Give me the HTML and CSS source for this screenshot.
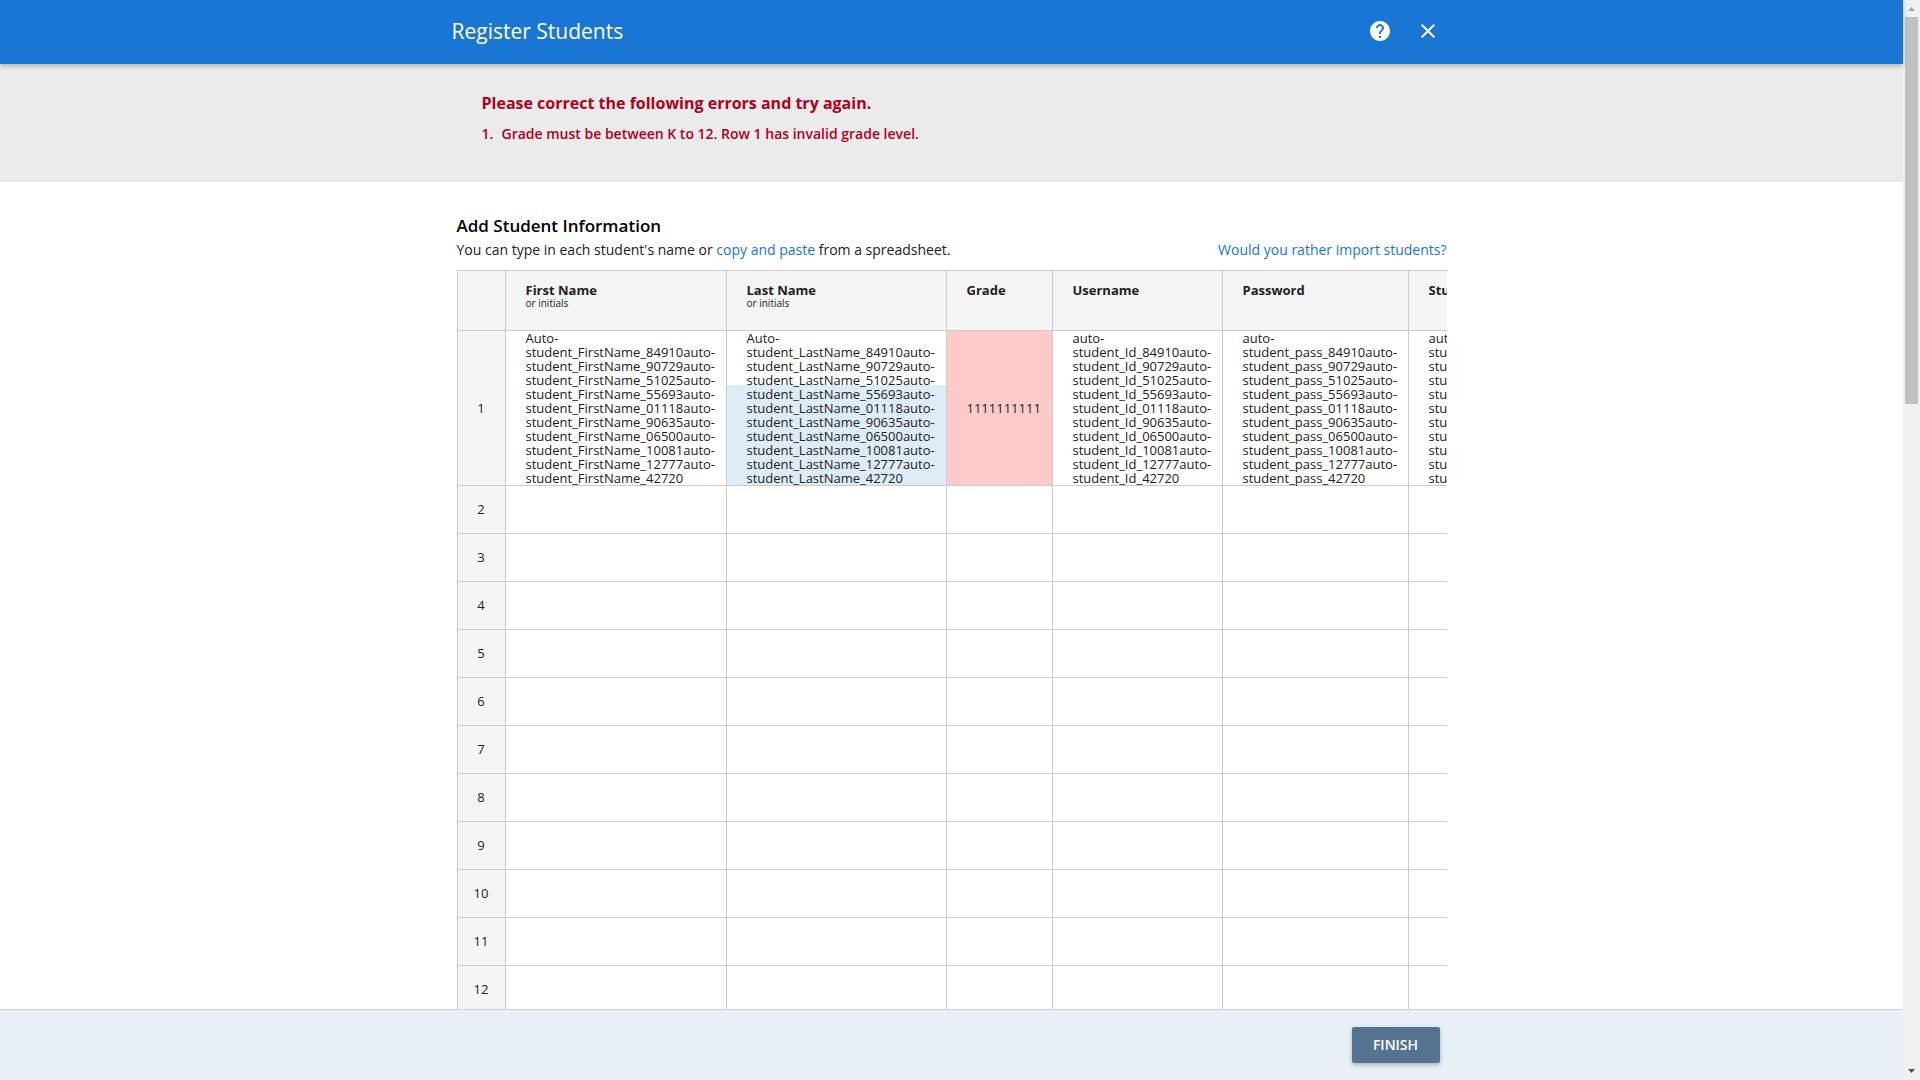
FILE: index.html
```html
<!DOCTYPE html>
<html lang="en">
<head>
<meta charset="utf-8">
<meta name="viewport" content="width=device-width, initial-scale=1">
<title>Register Students</title>
<link rel="stylesheet" href="styles.css">
</head>
<body>
<div class="page">
  <header class="topbar">
    <div class="topbar-inner">
      <h1 class="topbar-title">Register Students</h1>
      <div class="topbar-actions">
        <button class="icon-button" type="button" aria-label="Help">
          <svg class="icon" viewBox="0 0 24 24" aria-hidden="true"><path d="M12 2C6.48 2 2 6.48 2 12s4.48 10 10 10 10-4.48 10-10S17.52 2 12 2zm1 17h-2v-2h2v2zm2.07-7.75l-.9.92C13.45 12.9 13 13.5 13 15h-2v-.5c0-1.1.45-2.1 1.17-2.83l1.24-1.26c.37-.36.59-.86.59-1.41 0-1.1-.9-2-2-2s-2 .9-2 2H8c0-2.210 1.790-4 4-4s4 1.790 4 4c0 .88-.36 1.680-.93 2.250z"/></svg>
        </button>
        <button class="icon-button" type="button" aria-label="Close">
          <svg class="icon" viewBox="0 0 24 24" aria-hidden="true"><path d="M19 6.410L17.590 5 12 10.590 6.410 5 5 6.410 10.590 12 5 17.590 6.410 19 12 13.410 17.590 19 19 17.590 13.410 12z"/></svg>
        </button>
      </div>
    </div>
  </header>

  <main class="content">
    <section class="alert" role="alert">
      <div class="alert-inner">
        <h2 class="alert-title">Please correct the following errors and try again.</h2>
        <ol class="alert-list">
          <li>Grade must be between K to 12. Row 1 has invalid grade level.</li>
        </ol>
      </div>
    </section>

    <section class="students">
      <h2 class="students-title">Add Student Information</h2>
      <div class="students-intro">
        <p class="students-text">You can type in each student's name or <a class="link" href="#paste">copy and paste</a> from a spreadsheet.</p>
        <a class="link" href="#import">Would you rather import students?</a>
      </div>
      <div class="sheet-viewport">
        <table class="sheet">
          <colgroup>
            <col class="col-index"><col class="col-first"><col class="col-last"><col class="col-grade"><col class="col-user"><col class="col-pass"><col class="col-id">
          </colgroup>
          <thead>
            <tr>
              <td></td>
              <th scope="col">First Name<small class="hint">or initials</small></th>
              <th scope="col">Last Name<small class="hint">or initials</small></th>
              <th scope="col">Grade</th>
              <th scope="col">Username</th>
              <th scope="col">Password</th>
              <th scope="col">Student ID</th>
            </tr>
          </thead>
          <tbody>
            <tr>
              <th scope="row">1</th>
              <td>Auto-student_FirstName_84910auto-student_FirstName_90729auto-student_FirstName_51025auto-student_FirstName_55693auto-student_FirstName_01118auto-student_FirstName_90635auto-student_FirstName_06500auto-student_FirstName_10081auto-student_FirstName_12777auto-student_FirstName_42720</td>
              <td class="is-selected">Auto-student_LastName_84910auto-student_LastName_90729auto-student_LastName_51025auto-student_LastName_55693auto-student_LastName_01118auto-student_LastName_90635auto-student_LastName_06500auto-student_LastName_10081auto-student_LastName_12777auto-student_LastName_42720</td>
              <td class="is-invalid">1111111111</td>
              <td>auto-student_Id_84910auto-student_Id_90729auto-student_Id_51025auto-student_Id_55693auto-student_Id_01118auto-student_Id_90635auto-student_Id_06500auto-student_Id_10081auto-student_Id_12777auto-student_Id_42720</td>
              <td>auto-student_pass_84910auto-student_pass_90729auto-student_pass_51025auto-student_pass_55693auto-student_pass_01118auto-student_pass_90635auto-student_pass_06500auto-student_pass_10081auto-student_pass_12777auto-student_pass_42720</td>
              <td>auto-student_Id_84910auto-student_Id_90729auto-student_Id_51025auto-student_Id_55693auto-student_Id_01118auto-student_Id_90635auto-student_Id_06500auto-student_Id_10081auto-student_Id_12777auto-student_Id_42720</td>
            </tr>
            <tr><th scope="row">2</th><td></td><td></td><td></td><td></td><td></td><td></td></tr>
            <tr><th scope="row">3</th><td></td><td></td><td></td><td></td><td></td><td></td></tr>
            <tr><th scope="row">4</th><td></td><td></td><td></td><td></td><td></td><td></td></tr>
            <tr><th scope="row">5</th><td></td><td></td><td></td><td></td><td></td><td></td></tr>
            <tr><th scope="row">6</th><td></td><td></td><td></td><td></td><td></td><td></td></tr>
            <tr><th scope="row">7</th><td></td><td></td><td></td><td></td><td></td><td></td></tr>
            <tr><th scope="row">8</th><td></td><td></td><td></td><td></td><td></td><td></td></tr>
            <tr><th scope="row">9</th><td></td><td></td><td></td><td></td><td></td><td></td></tr>
            <tr><th scope="row">10</th><td></td><td></td><td></td><td></td><td></td><td></td></tr>
            <tr><th scope="row">11</th><td></td><td></td><td></td><td></td><td></td><td></td></tr>
            <tr><th scope="row">12</th><td></td><td></td><td></td><td></td><td></td><td></td></tr>
          </tbody>
        </table>
      </div>
    </section>
  </main>

  <footer class="bottombar">
    <div class="bottombar-inner">
      <button class="finish-button" type="button">FINISH</button>
    </div>
  </footer>
</div>

<div class="scrollbar" aria-hidden="true">
  <svg class="scroll-arrow scroll-arrow-up" viewBox="0 0 17 17"><path d="M5 11L8.500 7 12 11z"/></svg>
  <div class="scroll-track"><div class="scroll-thumb"></div></div>
  <svg class="scroll-arrow" viewBox="0 0 17 17"><path d="M5 6L8.500 10 12 6z"/></svg>
</div>
</body>
</html>
```
FILE: styles.css
```css
* {
  box-sizing: border-box;
}

body {
  display: grid;
  grid-template-columns: minmax(0, 1fr) 17px;
  height: 100vh;
  margin: 0;
  overflow: hidden;
  background: #fff;
  color: #212121;
  font-family: "Open Sans", sans-serif;
  font-size: 14px;
  line-height: 20px;
}

h1, h2, p, ol {
  margin: 0;
}

.page {
  display: flex;
  flex-direction: column;
  min-height: 0;
}

/* Top bar */
.topbar {
  flex: none;
  z-index: 1;
  height: 64px;
  background: #1976d4;
  color: #fff;
  box-shadow: 0 2px 5px rgba(0, 0, 0, 0.26);
}

.topbar-inner {
  display: flex;
  justify-content: space-between;
  align-items: center;
  max-width: 1000px;
  height: 62px;
  margin: 0 auto;
}

.topbar-title {
  font-size: 21px;
  font-weight: 400;
  line-height: 30px;
}

.topbar-actions {
  display: flex;
  gap: 24px;
  padding-right: 12px;
}

.icon-button {
  display: block;
  width: 24px;
  height: 24px;
  padding: 0;
  border: 0;
  background: none;
  color: inherit;
  cursor: pointer;
}

.icon {
  display: block;
  width: 24px;
  height: 24px;
  fill: currentColor;
}

.content {
  flex: 1;
  min-height: 0;
  overflow: hidden;
}

/* Error summary */
.alert {
  background: #ebebeb;
  color: #b00020;
}

.alert-inner {
  max-width: 990px;
  margin: 0 auto;
  padding: 28px 25px 38px;
}

.alert-title {
  font-size: 16px;
  font-weight: 700;
  line-height: 22px;
}

.alert-list {
  margin-top: 10px;
  padding: 0;
  font-weight: 600;
  list-style: none;
  counter-reset: error;
}

.alert-list li {
  display: grid;
  grid-template-columns: 20px 1fr;
  counter-increment: error;
}

.alert-list li::before {
  content: counter(error) ".";
}

/* Student sheet */
.students {
  max-width: 990px;
  margin: 0 auto;
  padding-top: 32px;
}

.students-title {
  color: #000;
  font-size: 17px;
  font-weight: 600;
  line-height: 24px;
}

.students-intro {
  display: flex;
  justify-content: space-between;
  padding: 2px 0 10px;
}

.link {
  color: #1976d4;
  text-decoration: none;
}

.sheet-viewport {
  overflow: hidden;
}

.sheet {
  width: 1160px;
  border-collapse: separate;
  border-spacing: 0;
  border-top: 1px solid #ccc;
  border-left: 1px solid #ccc;
  table-layout: fixed;
  font-size: 13px;
  line-height: 14px;
}

.col-index { width: 48px; }
.col-first { width: 221px; }
.col-last { width: 220px; }
.col-grade { width: 106px; }
.col-user { width: 170px; }
.col-pass { width: 186px; }

.sheet th,
.sheet td {
  height: 48px;
  padding: 0 10px 0 20px;
  border-right: 1px solid #ccc;
  border-bottom: 1px solid #ccc;
  text-align: left;
}

.sheet td:last-child {
  padding-right: 60px;
}

.sheet thead th,
.sheet thead td {
  height: 60px;
  padding-top: 12px;
  background: #f5f5f5;
  vertical-align: top;
}

.sheet thead th {
  font-weight: 700;
}

.sheet tbody th {
  padding: 0 0 1px;
  background: #f5f5f5;
  font-weight: 400;
  text-align: center;
}

.hint {
  display: block;
  font-size: 10px;
  font-weight: 400;
  line-height: 12px;
}

.sheet .is-selected {
  background: linear-gradient(#deecf7, #deecf7) bottom / 100% 100px no-repeat;
}

.sheet .is-invalid {
  background: #ffcaca;
}

/* Bottom bar */
.bottombar {
  flex: none;
  height: 71px;
  border-top: 1px solid #ccd3d3;
  background: #e8f0f8;
}

.bottombar-inner {
  display: flex;
  justify-content: flex-end;
  align-items: center;
  max-width: 990px;
  height: 100%;
  margin: 0 auto;
  padding-right: 7px;
}

.finish-button {
  min-width: 88px;
  height: 36px;
  padding: 0 16px;
  border: 0;
  border-radius: 2px;
  background: #547390;
  box-shadow: 0 2px 5px rgba(0, 0, 0, 0.26);
  color: #fff;
  font: 600 14px/20px "Open Sans", sans-serif;
  cursor: pointer;
}

/* Page scrollbar */
.scrollbar {
  display: flex;
  flex-direction: column;
  background: #f1f1f1;
}

.scroll-arrow {
  flex: none;
  width: 17px;
  height: 17px;
  fill: #505050;
}

.scroll-arrow-up {
  fill: #a3a3a3;
}

.scroll-track {
  flex: 1;
  padding: 0 2px;
}

.scroll-thumb {
  height: 37%;
  background: #c1c1c1;
}
```
